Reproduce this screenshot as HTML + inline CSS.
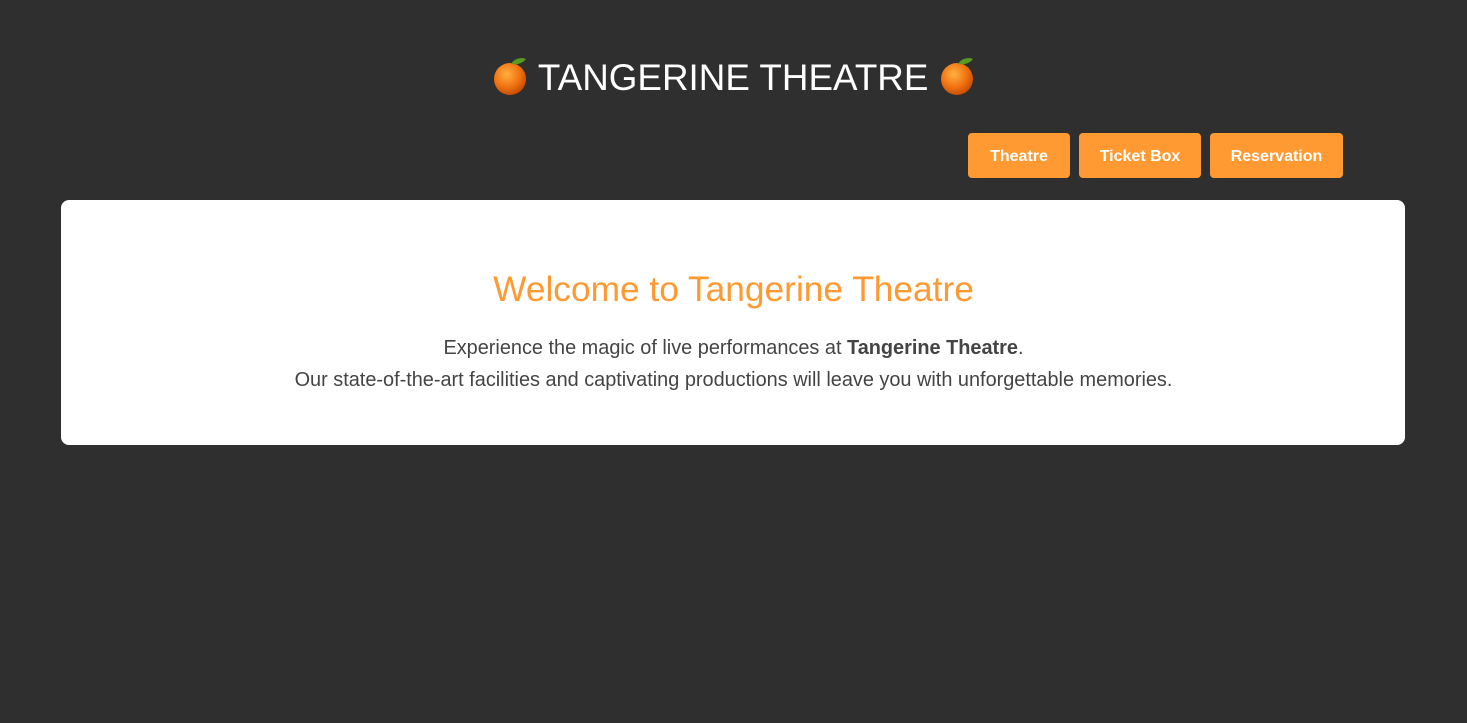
<!DOCTYPE html>
<html><head><style>
body{margin:0;background:#2f2f2f;font-family:"Liberation Sans",sans-serif;width:1467px;height:723px;overflow:hidden;position:relative}
h1{position:absolute;top:52px;left:0;width:1467px;text-align:center;margin:0;color:#fff;font-weight:400;font-size:36.8px;line-height:52px;white-space:nowrap}
h1 svg{vertical-align:-6px}
.btn{position:absolute;top:133px;height:45px;background:#ff9a33;border-radius:4px;color:#fff;font-weight:700;font-size:16px;line-height:48px;text-align:center}
.card{position:absolute;left:61px;top:200px;width:1344px;height:245px;background:#fff;border-radius:8px;text-align:center}
h2{margin:0;position:absolute;top:268px;left:0;width:100%;color:#ff9a33;font-weight:400;font-size:35.3px;line-height:44px;text-align:center}
p{position:absolute;left:0;width:100%;margin:0;color:#444;font-size:19.9px;line-height:32px;text-align:center}
</style></head><body>
<h1><svg width="36" height="40" viewBox="0 0 36 40"><defs><radialGradient id="g" cx="0.4" cy="0.35" r="0.7"><stop offset="0" stop-color="#ffb040"/><stop offset="0.6" stop-color="#f07010"/><stop offset="1" stop-color="#c04800"/></radialGradient></defs><circle cx="18" cy="23" r="16" fill="url(#g)"/><path d="M19 8 C22 2 30 1 34 3 C30 8 24 9 19 8Z" fill="#5a9a20"/></svg> TANGERINE THEATRE <svg width="36" height="40" viewBox="0 0 36 40"><circle cx="18" cy="23" r="16" fill="url(#g)"/><path d="M19 8 C22 2 30 1 34 3 C30 8 24 9 19 8Z" fill="#5a9a20"/></svg></h1>
<div class="btn" style="left:968px;width:102px">Theatre</div>
<div class="btn" style="left:1079px;width:122px">Ticket Box</div>
<div class="btn" style="left:1210px;width:133px">Reservation</div>
<div class="card"></div>
<h2>Welcome to Tangerine Theatre</h2>
<p style="top:332px">Experience the magic of live performances at <b>Tangerine Theatre</b>.</p>
<p style="top:364px">Our state-of-the-art facilities and captivating productions will leave you with unforgettable memories.</p>
</body></html>
